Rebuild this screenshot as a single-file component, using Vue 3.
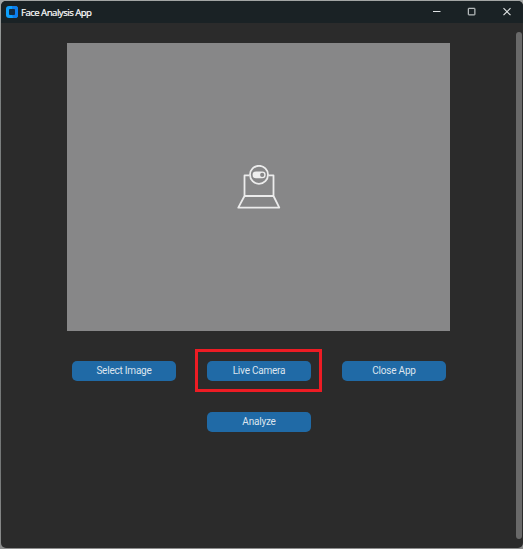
<script setup>
const actions = [
  { label: 'Select Image' },
  { label: 'Live Camera', highlighted: true },
  { label: 'Close App' },
]
</script>

<template>
  <div class="desktop">
    <div class="window">
      <header class="titlebar">
        <svg class="logo" width="12" height="12" viewBox="0 0 12 12">
          <rect width="12" height="12" rx="3" fill="#0ea0fb" />
          <path d="M6 0H9A3 3 0 0 1 12 3V9A3 3 0 0 1 9 12H7L6 9Z" fill="#0d7dec" />
          <rect x="3" y="3" width="6" height="6" rx="1" fill="#132a3f" />
        </svg>
        <span class="title">Face Analysis App</span>
        <svg class="controls" width="80" height="10" viewBox="0 0 80 10" fill="none" stroke="#dfe3e4">
          <path d="M0 4.5H7.5" />
          <rect x="35.3" y="1.3" width="6.6" height="6.6" rx=".4" />
          <path d="M70.5 1.2L77.5 8.2M77.5 1.2L70.5 8.2" stroke-width="1.15" />
        </svg>
      </header>
      <div class="body">
        <main class="content">
          <div class="preview">
            <svg width="44" height="44" viewBox="0 0 44 44" fill="none" stroke="#ececec" stroke-width="1.8" stroke-linejoin="round">
              <path d="M12.5 10.4H7.5V31H36.5V10.4H31.5M7.5 31L1.3 42.6H42.3L36.5 31" />
              <circle cx="22" cy="9.8" r="9" />
              <rect x="15.6" y="6.6" width="13" height="6.6" rx="3.3" fill="#efefef" stroke="none" />
              <circle cx="25.2" cy="9.9" r="2.1" fill="#878788" stroke="none" />
            </svg>
          </div>
          <div class="actions">
            <div v-for="a in actions" :key="a.label" class="slot" :class="{ highlighted: a.highlighted }">
              <button class="btn">{{ a.label }}</button>
            </div>
          </div>
          <button class="btn analyze">Analyze</button>
        </main>
        <div class="scrollbar"></div>
      </div>
    </div>
  </div>
</template>

<style>
body {
  background: #8d8e8e;
}
</style>

<style scoped>
.desktop {
  box-sizing: border-box;
  height: 549px;
  padding: 1px 0 1px 1px;
  background: linear-gradient(#a3a6a5, #7c8080 15%, #747777 85%, #8d8e8e);
}
.window {
  box-sizing: border-box;
  height: 547px;
  display: flex;
  flex-direction: column;
  overflow: hidden;
  border-radius: 5px;
  background: #2b2b2b;
}
.titlebar {
  box-sizing: border-box;
  flex: none;
  display: flex;
  align-items: center;
  height: 22px;
  padding: 0 10px 0 5px;
  background: #1a2225;
}
.title {
  margin-left: 3px;
  padding-top: 1px;
  font: 9.6px/14px "Noto Sans", "Open Sans", sans-serif;
  letter-spacing: -0.55px;
  color: #fff;
  -webkit-text-stroke: 0.15px #fff;
}
.controls {
  margin-left: auto;
}
.body {
  flex: 1;
  display: flex;
  justify-content: space-between;
}
.content {
  display: flex;
  flex-direction: column;
  align-items: center;
  width: 383px;
  margin-left: 66px;
  padding-top: 20px;
}
.preview {
  box-sizing: border-box;
  display: flex;
  align-items: center;
  justify-content: center;
  width: 383px;
  height: 288px;
  background: #878788;
}
.actions {
  display: grid;
  grid-template-columns: repeat(3, 127px);
  column-gap: 8px;
  margin-top: 18px;
}
.slot {
  box-sizing: border-box;
  display: flex;
  align-items: center;
  justify-content: center;
  height: 43px;
  border: 3px solid transparent;
}
.highlighted {
  border-color: #ed1c24;
}
.btn {
  width: 104px;
  height: 20px;
  padding: 0 0 0 1px;
  border: 0;
  border-radius: 5px;
  background: #206aa6;
  color: #dce4ee;
  font: 10px/20px Roboto, sans-serif;
  letter-spacing: -0.22px;
}
.slot .btn {
  margin-top: 1px;
}
.analyze {
  margin-top: 20px;
}
.scrollbar {
  width: 6px;
  height: 507px;
  margin: 9px 1px 0 0;
  border-radius: 3px;
  background: #696969;
}
</style>
